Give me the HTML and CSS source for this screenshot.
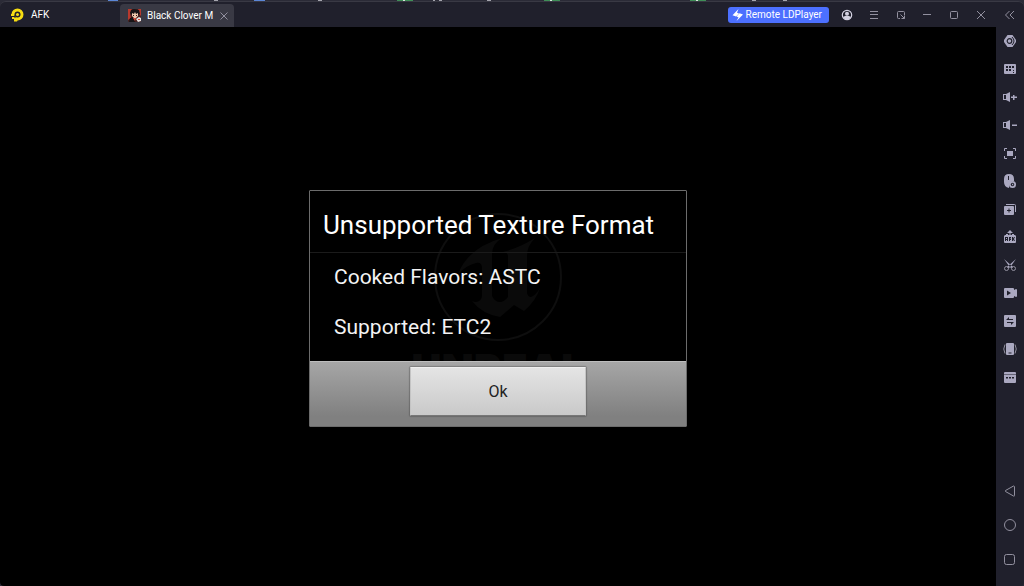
FILE: index.html
```
<!DOCTYPE html>
<html lang="en">
<head>
  <meta charset="UTF-8" />
  <title>AFK</title>
  <link rel="stylesheet" href="styles.css">
</head>
<body>
  <div class="behind">
    <svg width="1024" height="2">
      <path fill="#5b86d6" d="M108 0h10v1h-10zM254 0h11v1h-11z"/>
      <path fill="#3f8f58" d="M397 0h16v2h-16zM544 0h16v2h-16zM690 0h16v2h-16z"/>
      <path fill="#d5e8da" d="M403 0h2v1h-2zM550 0h2v1h-2zM696 0h2v1h-2z"/>
      <path fill="#a5a5ae" d="M214 0h4v1h-4zM318 0h4v1h-4zM433 0h2v2h-2zM439 0h3v1h-3zM487 0h4v1h-4zM752 0h4v1h-4zM783 0h4v1h-4z"/>
    </svg>
  </div>

  <div class="window">
    <div class="main">
      <header class="titlebar">
        <div class="home-tab">
          <svg class="logo" viewBox="0 0 14 14" width="14" height="14">
            <path fill="#f6dc12" d="M7.500.5a6 6 0 1 1 0 12L7 13.500H4V11H2V9H1V6h.5a6 6 0 0 1 6-5.500z"/>
            <circle cx="7.500" cy="6.500" r="3" fill="#20202c"/>
            <path fill="#20202c" d="M1 8h4v1H1zM4.500 7h1v3h-1z"/>
            <circle cx="7.500" cy="6.500" r="1.500" fill="#f6dc12"/>
          </svg>
          <span>AFK</span>
        </div>
        <div class="tab">
          <svg viewBox="0 0 13 13" width="13" height="13">
            <rect width="13" height="13" rx="1" fill="#48201f"/>
            <path fill="#b8392d" d="M0 0h4L2 5l1 4-3 2zM10 0h3v7l-2-2z"/>
            <path fill="#171417" d="M3 1l3-1 5 1 1 4-2 1H4L2 4zM2 9l3-1 2 5H1z"/>
            <path fill="#efc9ae" d="M4 4l2 1 1-2 1 2 2-1v3L8 9H6L4 7z"/>
            <path fill="#2a1718" d="M5 6h1v1H5zM8 6h1v1H8z"/>
            <path fill="#e8e3e2" d="M8 10l3-2 2 1v3l-3 1z"/>
            <path fill="#d94d3b" d="M5 9h3l-1 3zM10 10h2v1h-2z"/>
          </svg>
          <span>Black Clover M</span>
          <button class="tab-close" aria-label="Close tab">
            <svg viewBox="0 0 8 8" width="8" height="8"><path class="line" d="M.5.5l7 7M7.500.5l-7 7"/></svg>
          </button>
        </div>
        <button class="remote">
          <svg viewBox="0 0 11 12" width="11" height="12"><path fill="#fff" d="M6.500 0L.5 6.200 4 7.500 7 4.500l-2-.8zM7.500 4.300L4.500 7.500l2 .7L4.500 12 11 5.500z"/></svg>
          <span>Remote LDPlayer</span>
        </button>
        <div class="controls">
          <button aria-label="Account">
            <svg viewBox="0 0 12 12" width="12" height="12"><circle cx="6" cy="6" r="4.700" fill="none" stroke="#d2d0e0" stroke-width="1.200"/><circle cx="6" cy="4.700" r="2" fill="#d2d0e0"/><path fill="#d2d0e0" d="M2 8q4-2.500 8 0-1.500 3-4 3T2 8z"/></svg>
          </button>
          <button aria-label="Menu">
            <svg viewBox="0 0 12 12" width="12" height="12"><path class="line" d="M2 2.500h8M2 5.500h8M2 9.500h8"/></svg>
          </button>
          <button aria-label="Small window">
            <svg viewBox="0 0 12 12" width="12" height="12"><path class="line" d="M5 9.500H3.500q-1 0-1-1v-5q0-1 1-1h5q1 0 1 1V6M5.500 5.500l4 4M6.500 9.500h3v-3"/></svg>
          </button>
          <button aria-label="Minimize">
            <svg viewBox="0 0 12 12" width="12" height="12"><path class="line" d="M2 5.500h8"/></svg>
          </button>
          <button aria-label="Maximize">
            <svg viewBox="0 0 12 12" width="12" height="12"><rect class="line" x="2.500" y="2.500" width="7" height="7" rx="1"/></svg>
          </button>
          <button aria-label="Close">
            <svg viewBox="0 0 12 12" width="12" height="12"><path class="line" d="M2 2l8 8M10 2l-8 8"/></svg>
          </button>
        </div>
      </header>

      <main class="screen">
        <section class="dialog" role="dialog" aria-labelledby="dialog-title">
          <div class="watermark">
            <svg viewBox="0 0 128 130" width="128" height="130">
              <circle cx="64" cy="65" r="63" fill="none" stroke="#0e0e0e" stroke-width="2"/>
              <path fill="#0a0a0a" d="M24 62Q34 36 68 26q-10 6-10 16v42q3 6 8 6 4 0 8-5V45q0-5-5-5 16-4 32-14-8 8-8 18v37q1 4 4 4 5-2 9-9-4 13-16 23l-10-6-14 12q-18-3-28-16 4 2 7 0 3-2 3-6V56q0-6-6-5-9 2-18 11z"/>
            </svg>
            <div class="watermark-name">UNREAL</div>
          </div>
          <h1 class="dialog-title" id="dialog-title">Unsupported Texture Format</h1>
          <div class="dialog-body">
            <p>Cooked Flavors: ASTC</p>
            <p>Supported: ETC2</p>
          </div>
          <div class="dialog-footer">
            <button class="ok">Ok</button>
          </div>
        </section>
      </main>
    </div>

    <aside class="sidebar">
      <button class="collapse" aria-label="Collapse">
        <svg viewBox="0 0 12 12" width="12" height="12"><path class="line" d="M5.500 2l-4 4 4 4M10 2L6 6l4 4"/></svg>
      </button>
      <div class="tools">
        <button aria-label="Settings">
          <svg viewBox="0 0 14 14" width="14" height="14"><path d="M4.500 1h5l3.500 5v2l-3.500 5h-5L1 8V6z"/><circle cx="6.500" cy="7" r="2.300" fill="none" stroke="#20202c" stroke-width="1.200"/><path fill="none" stroke="#20202c" d="M9 3q4 4 0 8"/></svg>
        </button>
        <button aria-label="Keyboard mapping">
          <svg viewBox="0 0 14 14" width="14" height="14"><path fill-rule="evenodd" d="M2 2h10q1 0 1 1v8q0 1-1 1H2q-1 0-1-1V3q0-1 1-1zM3 4v2h2V4zM6 4v2h2V4zM9 4v2h2V4zM3 7v2h2V7zM6 7v2h2V7zM10 8v1h1V8zM10 10v1h1v-1z"/></svg>
        </button>
        <button aria-label="Volume up">
          <svg viewBox="0 0 14 14" width="14" height="14"><path fill-rule="evenodd" d="M0 4h3l4-2v10l-4-2H0zM1 5v4h2V5zM10 5h1.500v1.500H14V8h-2.500v2H10V8H8V6.500h2z"/></svg>
        </button>
        <button aria-label="Volume down">
          <svg viewBox="0 0 14 14" width="14" height="14"><path fill-rule="evenodd" d="M0 4h3l4-2v10l-4-2H0zM1 5v4h2V5zM9 6.500h5V8H9z"/></svg>
        </button>
        <button aria-label="Full screen">
          <svg viewBox="0 0 14 14" width="14" height="14"><rect x="4" y="5" width="6" height="5"/><path class="line bright" d="M1.500 5V2.500H4M10 2.500h2.500V5M12.500 10v2.500H10M4 12.500H1.500V10"/></svg>
        </button>
        <button aria-label="Mouse control">
          <svg viewBox="0 0 14 14" width="14" height="14"><path d="M6 0q5 0 5 5v2q-5 0-5 7Q1 13 1 8V5q0-5 5-5z"/><path stroke="#20202c" d="M5.500 2v4"/><circle cx="9.500" cy="10.500" r="3.500"/><circle cx="9.500" cy="10.500" r="1.700" fill="#20202c"/><path d="M9 9.500v2l1.500-1z"/></svg>
        </button>
        <button aria-label="Multi instance">
          <svg viewBox="0 0 14 14" width="14" height="14"><path fill-rule="evenodd" d="M2 4h8q1 0 1 1v7q0 1-1 1H2q-1 0-1-1V5q0-1 1-1zM5.500 6.500V8H4v1h1.500v1.500h1V9H8V8H6.500V6.500z"/><path class="line bright" d="M3 2.500h8.500q1 0 1 1V10"/></svg>
        </button>
        <button aria-label="Install APK">
          <svg viewBox="0 0 14 14" width="14" height="14"><path d="M7 0l3 3H7.500v2h-1V3H4zM3 4h2v1H3zM9 4h2v1H9z"/><path fill-rule="evenodd" d="M2 5h10l1 1v6q0 1-1 1H2q-1 0-1-1V6zM2 7v4h1v-1h1v1h1V7zM3 8h1v1H3zM6 7v4h1v-1h1V7zM7 8h.5v1H7zM9 7v4h1V9.500L11 11h1l-1-2 1-2h-1l-1 1.500V7z"/></svg>
        </button>
        <button aria-label="Scissors">
          <svg viewBox="0 0 14 14" width="14" height="14"><path d="M1 1l9 8-1.500 1.500L6 8zM13 1L4 9l1.500 1.500L8 8z"/><circle class="line" cx="3.500" cy="10.500" r="2"/><circle class="line" cx="10.500" cy="10.500" r="2"/></svg>
        </button>
        <button aria-label="Record">
          <svg viewBox="0 0 14 14" width="14" height="14"><path fill-rule="evenodd" d="M2 2h8q1 0 1 1v1l2-1q1 0 1 1v6q0 1-1 1l-2-1v1q0 1-1 1H2q-1 0-1-1V3q0-1 1-1zM4 4.500v5L8 7z"/></svg>
        </button>
        <button aria-label="Shared folder">
          <svg viewBox="0 0 14 14" width="14" height="14"><path fill-rule="evenodd" d="M2 1h10q1 0 1 1v10q0 1-1 1H2q-1 0-1-1V2q0-1 1-1zM6 3L3 6h7V5H6zM4 8v1h4v2l3-3z"/></svg>
        </button>
        <button aria-label="Shake">
          <svg viewBox="0 0 14 14" width="14" height="14"><path fill-rule="evenodd" d="M4 1h6q1 0 1 1v10q0 1-1 1H4q-1 0-1-1V2q0-1 1-1zM5.500 10.500v1h3v-1z"/><path class="line" d="M2 2.500Q-.5 7 2 11.500M12 2.500q2.500 4.500 0 9"/></svg>
        </button>
        <button aria-label="More">
          <svg viewBox="0 0 14 14" width="14" height="14"><path fill-rule="evenodd" d="M2 2h10q1 0 1 1v9q0 1-1 1H2q-1 0-1-1V3q0-1 1-1zM1 4h12v.5H1zM3 7v1.500h2V7zM6 7v1.500h2V7zM9 7v1.500h2V7z"/></svg>
        </button>
      </div>
      <div class="nav">
        <button aria-label="Back">
          <svg viewBox="0 0 14 14" width="14" height="14"><path class="line" d="M10.500 2q1 0 1 1v8.500q0 1-1 .5L2.500 7.500q-1-.5 0-1z"/></svg>
        </button>
        <button aria-label="Home">
          <svg viewBox="0 0 14 14" width="14" height="14"><circle class="line" cx="7" cy="7" r="5.500"/></svg>
        </button>
        <button aria-label="Recent apps">
          <svg viewBox="0 0 14 14" width="14" height="14"><rect class="line" x="1.500" y="2.500" width="10" height="10" rx="2"/></svg>
        </button>
      </div>
    </aside>
  </div>
</body>
</html>
```
FILE: styles.css
```
* {
  box-sizing: border-box;
}

body {
  margin: 0;
  height: 100vh;
  display: flex;
  flex-direction: column;
  overflow: hidden;
  background-color: #2b2b37;
  font-family: Roboto, sans-serif;
  color: #fff;
}

button {
  margin: 0;
  padding: 0;
  border: none;
  background: none;
  font-family: inherit;
  color: inherit;
  display: flex;
  align-items: center;
  justify-content: center;
}

svg {
  display: block;
  flex: none;
}

.line {
  fill: none;
  stroke: #92909f;
  stroke-width: 1;
}

.bright {
  stroke: #aaa8c0;
}

.behind {
  height: 1px;
  overflow: hidden;
}

.window {
  flex: 1;
  display: flex;
  min-height: 0;
  border-top: 1px solid #393944;
  border-radius: 6px 6px 4px 4px;
  background-color: #20202c;
  overflow: hidden;
}

.main {
  flex: 1;
  display: flex;
  flex-direction: column;
}

/* title bar */
.titlebar {
  height: 25px;
  display: flex;
  align-items: center;
  font-size: 10px;
  line-height: 16px;
  padding-right: 2px;
}

.home-tab {
  width: 120px;
  padding-left: 10px;
  display: flex;
  align-items: center;
  gap: 7px;
}

.tab {
  align-self: flex-end;
  height: 23px;
  width: 114px;
  padding: 0 6px 0 8px;
  display: flex;
  align-items: center;
  gap: 6px;
  border-radius: 4px 4px 0 0;
  background-color: #393944;
  white-space: nowrap;
}

.tab-close {
  margin-left: auto;
}

.remote {
  margin-left: auto;
  height: 16px;
  padding: 0 7px 0 4px;
  gap: 3px;
  border-radius: 3px;
  background-color: #4c70ff;
  font-size: 10px;
}

.controls {
  width: 160px;
  margin-left: 5px;
  display: flex;
}

.controls button {
  flex: 1;
}

/* emulator screen */
.screen {
  flex: 1;
  display: grid;
  place-items: center;
  padding-top: 3px;
  background-color: #000;
  border-radius: 0 0 0 4px;
}

.dialog {
  position: relative;
  width: 378px;
  max-width: 100%;
  border: 1px solid #6c6c6c;
  border-radius: 1px;
  background-color: #000;
  overflow: hidden;
}

.watermark {
  position: absolute;
  top: 21px;
  left: 0;
  right: 0;
  display: flex;
  flex-direction: column;
  align-items: center;
}

.watermark-name {
  margin-top: 4px;
  font-family: Inter, sans-serif;
  font-size: 42px;
  line-height: 48px;
  font-weight: 900;
  color: #0a0a0a;
}

.dialog-title {
  position: relative;
  margin: 0;
  padding: 18px 13px 11px;
  border-bottom: 1px solid #1b1b1b;
  font-size: 26px;
  line-height: 32px;
  font-weight: 400;
}

.dialog-body {
  position: relative;
  padding: 11px 24px 21px;
  display: flex;
  flex-direction: column;
  gap: 24px;
  font-size: 21px;
  line-height: 26px;
  color: #f3f3f3;
}

.dialog-body p {
  margin: 0;
}

.dialog-footer {
  position: relative;
  display: flex;
  justify-content: center;
  padding: 5px 0 10px;
  border-top: 1px solid #bdbdbd;
  background: linear-gradient(#a6a6a6, #808080 85%);
}

.ok {
  width: 176px;
  height: 49px;
  border: 1px solid #c4c4c4;
  border-top-color: #efefef;
  border-bottom-color: #777;
  border-radius: 1px;
  background: linear-gradient(#e4e4e4, #c9c9c9);
  box-shadow: 0 0 1px 1px rgba(70, 70, 70, 0.4);
  font-size: 16px;
  color: #222;
}

/* tool column */
.sidebar {
  width: 28px;
  display: flex;
  flex-direction: column;
}

.sidebar button {
  width: 28px;
  height: 28px;
}

.sidebar .collapse {
  height: 25px;
}

.tools {
  fill: #aaa8c0;
}

.nav {
  margin-top: auto;
  padding-bottom: 10px;
}

.nav button {
  height: 34px;
}
```
